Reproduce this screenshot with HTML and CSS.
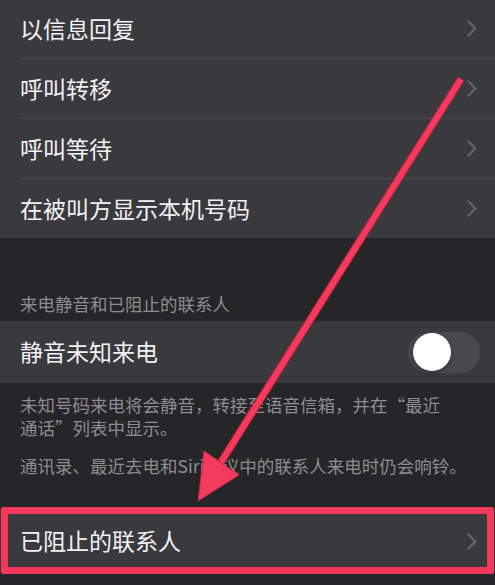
FILE: index.html
```html
<!DOCTYPE html>
<html lang="zh-CN">
<head>
<meta charset="utf-8">
<title>电话设置</title>
<link rel="stylesheet" href="styles.css">
</head>
<body>
<div class="page">
  <div class="group group-top">
    <div class="row"><span class="label">以信息回复</span><svg class="chev" viewBox="0 0 10 17" width="10" height="17"><path d="M1.5 1.5 L8.3 8.5 L1.5 15.5" /></svg></div>
    <div class="row"><span class="label">呼叫转移</span><svg class="chev" viewBox="0 0 10 17" width="10" height="17"><path d="M1.5 1.5 L8.3 8.5 L1.5 15.5" /></svg></div>
    <div class="row"><span class="label">呼叫等待</span><svg class="chev" viewBox="0 0 10 17" width="10" height="17"><path d="M1.5 1.5 L8.3 8.5 L1.5 15.5" /></svg></div>
    <div class="row"><span class="label">在被叫方显示本机号码</span><svg class="chev" viewBox="0 0 10 17" width="10" height="17"><path d="M1.5 1.5 L8.3 8.5 L1.5 15.5" /></svg></div>
  </div>

  <div class="section-header">来电静音和已阻止的联系人</div>

  <div class="group">
    <div class="row row-toggle"><span class="label">静音未知来电</span><span class="toggle"><span class="knob"></span></span></div>
  </div>

  <div class="footer">
    <p class="note-narrow">未知号码来电将会静音，转接至语音信箱，并在“最近通话”列表中显示。</p>
    <p>通讯录、最近去电和Siri建议中的联系人来电时仍会响铃。</p>
  </div>

  <div class="group group-blocked">
    <div class="row"><span class="label">已阻止的联系人</span><svg class="chev" viewBox="0 0 10 17" width="10" height="17"><path d="M1.5 1.5 L8.3 8.5 L1.5 15.5" /></svg></div>
  </div>

  <div class="highlight"></div>
  <svg class="arrow" viewBox="0 0 495 585" width="495" height="585">
    <line x1="461" y1="80" x2="218" y2="468" class="arrow-edge" />
    <line x1="461" y1="80" x2="218" y2="468" class="arrow-line" />
    <polygon points="198,502 239,476 204,452" class="arrow-head" />
  </svg>
</div>
</body>
</html>
```

FILE: styles.css
```css
html, body {
  margin: 0;
  padding: 0;
}
body {
  background: #262528;
  font-family: "Noto Sans CJK SC", "Noto Sans", sans-serif;
  color: #f2f2f4;
  width: 495px;
  height: 585px;
  overflow: hidden;
}
.page {
  position: relative;
  width: 495px;
  height: 585px;
}
.group {
  background: #3a393e;
  padding-left: 20px;
}
.group-top {
  margin-top: -1px;
}
.row {
  display: flex;
  align-items: center;
  justify-content: space-between;
  height: 59px;
  padding-right: 18px;
}
.group-top .row:not(:last-child) {
  border-bottom: 1px solid #4a494f;
}
.label {
  font-size: 23px;
  line-height: 30px;
  padding-bottom: 2px;
}
.chev path {
  fill: none;
  stroke: #66656b;
  stroke-width: 2.2;
  stroke-linecap: round;
  stroke-linejoin: round;
}
.section-header {
  height: 83px;
  box-sizing: border-box;
  display: flex;
  align-items: flex-end;
  padding: 0 20px 5px;
  font-size: 17.5px;
  line-height: 24px;
  color: #8e8d93;
}
.row-toggle {
  height: 62px;
  padding-right: 15px;
}
.toggle {
  width: 72px;
  height: 41px;
  border-radius: 21px;
  background: #4a494f;
  display: flex;
  align-items: center;
  padding-left: 5px;
  box-sizing: border-box;
}
.knob {
  width: 38px;
  height: 38px;
  border-radius: 50%;
  background: #ffffff;
  box-shadow: 0 2px 5px rgba(0, 0, 0, 0.35);
}
.footer {
  padding: 10px 10px 0 20px;
  font-size: 17.5px;
  line-height: 23px;
  color: #8e8d93;
}
.footer p {
  margin: 0 0 15px;
}
.footer p:last-child {
  margin-bottom: 0;
}
.note-narrow {
  max-width: 430px;
}
.group-blocked {
  margin-top: 33px;
}
.group-blocked .row {
  height: 62px;
}
.highlight {
  position: absolute;
  left: 1px;
  top: 508px;
  width: 493px;
  height: 67px;
  box-sizing: border-box;
  border: 7px solid #f2385b;
  border-radius: 2px;
}
.arrow {
  position: absolute;
  left: 0;
  top: 0;
  pointer-events: none;
}
.arrow-edge {
  stroke: #b3243f;
  stroke-width: 8;
}
.arrow-line {
  stroke: #f43a5d;
  stroke-width: 6;
}
.arrow-head {
  fill: #f43a5d;
  stroke: #c42a47;
  stroke-width: 1;
  stroke-linejoin: round;
}
```
